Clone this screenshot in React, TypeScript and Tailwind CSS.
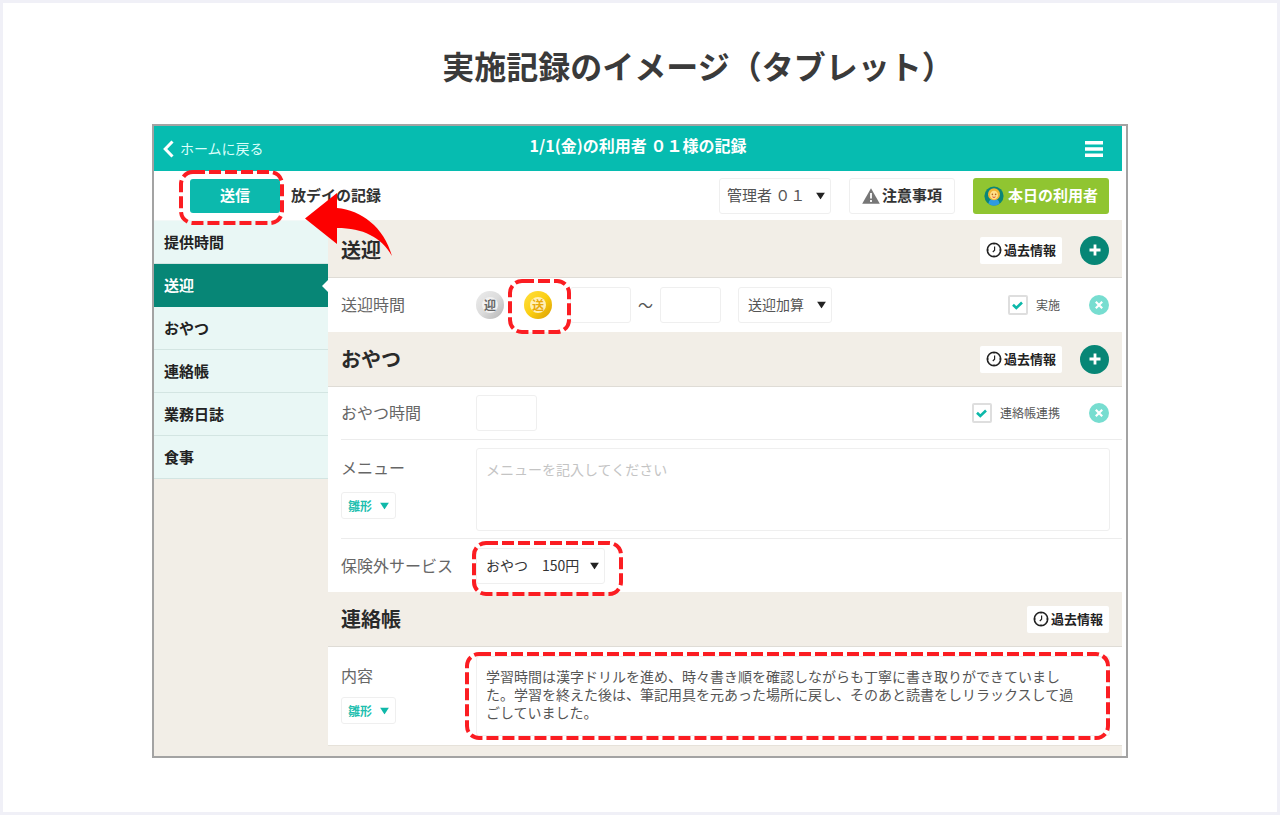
import { useState } from 'react'
import type { ReactNode } from 'react'
import { clsx } from 'clsx'

const NAV_ITEMS = ['提供時間', '送迎', 'おやつ', '連絡帳', '業務日誌', '食事']

const REPORT =
  '学習時間は漢字ドリルを進め、時々書き順を確認しながらも丁寧に書き取りができていました。学習を終えた後は、筆記用具を元あった場所に戻し、そのあと読書をしリラックスして過ごしていました。'

// Red dashed frame laid over the element it points out
function Highlight({ className }: { className: string }) {
  return (
    <div className={clsx('pointer-events-none absolute z-10 p-[2px]', className)}>
      <svg className="block h-full w-full overflow-visible" aria-hidden="true">
        <rect width="100%" height="100%" rx="12" fill="none" stroke="#fb1d22" strokeWidth="4" strokeDasharray="12 4" />
      </svg>
    </div>
  )
}

function RedArrow() {
  return (
    <svg
      className="pointer-events-none absolute top-[22px] left-[151px] z-20 h-[64px] w-[88px]"
      viewBox="0 0 88 64"
      aria-hidden="true"
    >
      <path d="M0 25.5 32 0v15c24 2 47 19 55 48-11-19-29-28-55-28v16z" fill="#fd0000" />
    </svg>
  )
}

interface SelectBoxProps {
  label: string
  value: string
  className: string
  arrowClassName?: string
}

function SelectBox({ label, value, className, arrowClassName = 'right-[6px] text-[#222]' }: SelectBoxProps) {
  return (
    <div className="relative flex w-fit">
      <select
        aria-label={label}
        className={clsx('appearance-none rounded-[3px] border border-[#efefef] bg-white', className)}
      >
        <option>{value}</option>
      </select>
      <svg
        className={clsx('pointer-events-none absolute top-1/2 h-[7px] w-[9px] -translate-y-1/2', arrowClassName)}
        viewBox="0 0 9 7"
        aria-hidden="true"
      >
        <path d="M0 0h9L4.5 7z" fill="currentColor" />
      </svg>
    </div>
  )
}

function TemplateSelect() {
  return (
    <SelectBox
      label="雛形"
      value="雛形"
      className="h-[27px] w-[55px] pl-[6px] text-xs font-bold text-[#1fbfb0]"
      arrowClassName="right-[7px] text-[#0fb8a9]"
    />
  )
}

function TimeInput({ id, label }: { id: string; label: string }) {
  return (
    <input
      id={id}
      type="text"
      aria-label={label}
      className="h-9 w-[61px] rounded-[3px] border border-[#efefef] bg-white px-2 text-sm text-[#555]"
    />
  )
}

function PastButton() {
  return (
    <button type="button" className="flex h-[27px] items-center gap-[2px] rounded-[2px] bg-white px-[6px] text-[#222]">
      <svg className="h-4 w-4" viewBox="0 0 16 16" fill="none" stroke="currentColor" aria-hidden="true">
        <circle cx="8" cy="8" r="6.7" strokeWidth="1.6" />
        <path d="M8.6 4.5v3.8L6.8 10" strokeWidth="1.2" />
        <path d="M8 1.5v1.4M8 13.1v1.4M1.5 8h1.4M13.1 8h1.4" strokeWidth="0.9" />
      </svg>
      <span className="text-[13px] font-bold">過去情報</span>
    </button>
  )
}

function AddButton() {
  return (
    <button
      type="button"
      aria-label="追加"
      className="flex h-[29px] w-[29px] items-center justify-center rounded-full bg-[#078676] text-white"
    >
      <svg className="h-3 w-3" viewBox="0 0 12 12" stroke="currentColor" strokeWidth="2.8" aria-hidden="true">
        <path d="M6 0.5v11M0.5 6h11" />
      </svg>
    </button>
  )
}

function RemoveButton() {
  return (
    <button
      type="button"
      aria-label="削除"
      className="flex h-5 w-5 items-center justify-center rounded-full bg-[#77ddd0] text-white"
    >
      <svg className="h-2 w-2" viewBox="0 0 8 8" stroke="currentColor" strokeWidth="2.2" aria-hidden="true">
        <path d="M0.8 0.8l6.4 6.4M7.2 0.8L0.8 7.2" />
      </svg>
    </button>
  )
}

function CheckField({ label }: { label: string }) {
  const [checked, setChecked] = useState(true)

  return (
    <label className="flex items-center gap-2 text-xs text-[#555]">
      <span className="relative flex">
        <input
          type="checkbox"
          checked={checked}
          onChange={(e) => setChecked(e.target.checked)}
          className="h-5 w-5 appearance-none rounded-[2px] border-2 border-[#dedede] bg-white"
        />
        {checked && (
          <svg
            className="pointer-events-none absolute inset-0 m-auto h-[9px] w-[11px]"
            viewBox="0 0 11 9"
            fill="none"
            stroke="#0cb8a9"
            strokeWidth="2.6"
            aria-hidden="true"
          >
            <path d="M1 3.8l3.3 3.2L10 1.5" />
          </svg>
        )}
      </span>
      {label}
    </label>
  )
}

function Coin({ label, active = false }: { label: string; active?: boolean }) {
  return (
    <button
      type="button"
      aria-pressed={active}
      className={clsx(
        'flex h-7 w-7 items-center justify-center rounded-full bg-gradient-to-br',
        active ? 'from-[#ffdf3a] via-[#fbcf10] to-[#d99c05]' : 'from-[#ececec] via-[#dcdcdc] to-[#b4b4b4]',
      )}
    >
      <span
        className={clsx(
          'flex h-4 w-4 items-center justify-center rounded-full text-xs font-bold leading-none',
          active ? 'bg-[#fff0b8] text-[#e8a90c]' : 'bg-[#f1f1f1] text-[#666]',
        )}
      >
        {label}
      </span>
    </button>
  )
}

function SectionHeader({ title, children }: { title: string; children: ReactNode }) {
  return (
    <div className="flex min-h-[55px] items-center justify-between border-b border-[#dfdcd6] bg-[#f2eee7] px-[13px]">
      <h2 className="text-xl font-bold text-[#2a2a2a]">{title}</h2>
      <div className="flex items-center gap-[18px]">{children}</div>
    </div>
  )
}

const rowLabel = 'w-[135px] shrink-0 pb-[2px] text-base text-[#666]'

export default function App() {
  const [current, setCurrent] = useState('送迎')

  return (
    <div className="min-h-screen border-[3px] border-[#f0f0f7] bg-white pt-[38px] font-['Noto_Sans_CJK_JP',sans-serif]">
      <h1 className="mb-[35px] pl-[116px] text-center text-[32px] leading-[48px] font-bold text-[#3a3a3a]">
        実施記録のイメージ（タブレット）
      </h1>

      <div className="mx-[149px] border-2 border-[#a3a3a3] pr-1">
        <header className="grid h-[45px] grid-cols-[1fr_auto_1fr] items-center bg-[#06bcb0] text-white">
          <a href="#home" className="flex items-center gap-[6px] pl-[9px] text-sm text-[#d9fffb]">
            <svg className="h-[18px] w-[11px]" viewBox="0 0 11 18" fill="none" stroke="#fff" strokeWidth="3" aria-hidden="true">
              <path d="M9.5 1.5L2.2 9l7.3 7.5" />
            </svg>
            <span className="pb-[2px]">ホームに戻る</span>
          </a>
          <p className="pb-2 text-base font-bold">1/1(金)の利用者 ０１様の記録</p>
          <button type="button" aria-label="メニューを開く" className="mr-[19px] justify-self-end">
            <svg className="h-4 w-[18px]" viewBox="0 0 18 16" fill="currentColor" aria-hidden="true">
              <path d="M0 0h18v3.6H0zM0 6.2h18v3.6H0zM0 12.4h18V16H0z" />
            </svg>
          </button>
        </header>

        <div className="relative flex min-h-[49px] items-center bg-white pr-[13px] pl-9 text-[15px]">
          <div className="relative flex">
            <button type="button" className="h-[34px] w-[90px] rounded-[3px] bg-[#0cb9ad] font-bold text-white">
              送信
            </button>
            <Highlight className="-top-[9px] -right-[4px] -bottom-[12px] -left-[11px]" />
          </div>
          <span className="ml-[11px] font-bold text-[#333]">放デイの記録</span>
          <RedArrow />
          <div className="ml-auto flex items-center gap-[18px]">
            <SelectBox label="担当者" value="管理者 ０１" className="h-9 w-[112px] pl-[7px] text-[#555]" />
            <button
              type="button"
              className="flex h-9 items-center gap-[2px] rounded-[3px] border border-[#efefef] bg-white px-3 font-bold text-[#333]"
            >
              <svg className="h-4 w-[18px]" viewBox="0 0 18 16" aria-hidden="true">
                <path d="M9 0.3L17.8 15.7H0.2z" fill="#777" />
                <path d="M9 5v5.6M9 12v2" stroke="#fff" strokeWidth="1.8" />
              </svg>
              注意事項
            </button>
            <button
              type="button"
              className="flex h-9 items-center gap-1 rounded-[3px] bg-[#90c531] px-[11px] font-bold text-white"
            >
              <svg className="h-5 w-5" viewBox="0 0 20 20" aria-hidden="true">
                <circle cx="10" cy="10" r="9.6" fill="#0a8579" />
                <path d="M4.5 17.8C5 14 7 12.8 10 12.8s5 1.2 5.5 5a9.6 9.6 0 0 1-11 0z" fill="#2e9be0" />
                <circle cx="10" cy="8.3" r="6" fill="#f2b632" />
                <ellipse cx="10" cy="9" rx="4" ry="4.3" fill="#ffdf8a" />
                <circle cx="8.4" cy="8.4" r="0.8" fill="#b5651d" />
                <circle cx="11.6" cy="8.4" r="0.8" fill="#b5651d" />
                <path d="M8.5 10.800q1.5 1.400 3 0" fill="none" stroke="#e0503a" strokeWidth="1" />
              </svg>
              本日の利用者
            </button>
          </div>
        </div>

        <div className="flex bg-[#f2eee7]">
          <nav className="w-[174px] shrink-0">
            <ul className="border-t border-[#f3f8f7]">
              {NAV_ITEMS.map((item) => (
                <li key={item}>
                  <a
                    href={`#${item}`}
                    onClick={() => setCurrent(item)}
                    className={clsx(
                      'relative flex h-[43px] items-center border-b pl-[10px] text-[15px] font-bold',
                      item === current
                        ? 'border-[#078676] bg-[#078676] text-white'
                        : 'border-[#d3e5e2] bg-[#e9f7f5] text-[#222]',
                    )}
                  >
                    {item}
                    {item === current && (
                      <svg className="absolute top-4 right-0 h-3 w-[6px]" viewBox="0 0 6 12" aria-hidden="true">
                        <path d="M6 0v12L0 6z" fill="#fff" />
                      </svg>
                    )}
                  </a>
                </li>
              ))}
            </ul>
          </nav>

          <main className="min-w-0 flex-1 bg-white">
            <section className="bg-[#f2eee7] pt-[3px]">
              <SectionHeader title="送迎">
                <PastButton />
                <AddButton />
              </SectionHeader>
              <div className="flex min-h-[54px] items-center bg-white px-[13px]">
                <label htmlFor="pickup-from" className={rowLabel}>
                  送迎時間
                </label>
                <div className="flex items-center gap-5">
                  <Coin label="迎" />
                  <div className="relative">
                    <Coin label="送" active />
                    <Highlight className="-top-[12px] -right-[19px] -bottom-[15px] -left-[16px]" />
                  </div>
                </div>
                <div className="ml-[18px] flex items-center gap-[7px]">
                  <TimeInput id="pickup-from" label="送迎開始時間" />
                  <span className="text-[15px] text-[#555]">～</span>
                  <TimeInput id="pickup-to" label="送迎終了時間" />
                </div>
                <div className="ml-[17px]">
                  <SelectBox label="送迎加算" value="送迎加算" className="h-9 w-[94px] pb-[2px] pl-[9px] text-sm text-[#555]" />
                </div>
                <div className="ml-auto flex items-center gap-[29px]">
                  <CheckField label="実施" />
                  <RemoveButton />
                </div>
              </div>
            </section>

            <section>
              <SectionHeader title="おやつ">
                <PastButton />
                <AddButton />
              </SectionHeader>
              <div className="flex min-h-[52px] items-center px-[13px]">
                <label htmlFor="snack-time" className={rowLabel}>
                  おやつ時間
                </label>
                <TimeInput id="snack-time" label="おやつ時間" />
                <div className="ml-auto flex items-center gap-[29px]">
                  <CheckField label="連絡帳連携" />
                  <RemoveButton />
                </div>
              </div>
              <div className="ml-[13px] flex border-t border-[#ececec] pt-2 pr-3 pb-[7px]">
                <div className="w-[135px] shrink-0 pt-[7px]">
                  <label htmlFor="menu" className="mb-[13px] block text-base text-[#666]">
                    メニュー
                  </label>
                  <TemplateSelect />
                </div>
                <textarea
                  id="menu"
                  placeholder="メニューを記入してください"
                  className="h-[83px] min-w-0 flex-1 resize-none rounded-[3px] border border-[#efefef] bg-white px-[9px] pt-[10px] text-sm leading-5 text-[#555] placeholder:text-[#c4c4c4]"
                />
              </div>
              <div className="ml-[13px] flex min-h-[54px] items-center border-t border-[#ececec]">
                <span className={rowLabel}>保険外サービス</span>
                <div className="relative">
                  <SelectBox
                    label="保険外サービス"
                    value="おやつ　150円"
                    className="h-9 w-[129px] pb-[2px] pl-[9px] text-sm text-[#333]"
                  />
                  <Highlight className="-top-[7px] -right-[18px] -bottom-[12px] -left-[4px]" />
                </div>
              </div>
            </section>

            <section>
              <SectionHeader title="連絡帳">
                <PastButton />
              </SectionHeader>
              <div className="flex min-h-[98px] py-[9px] pr-3 pl-[13px]">
                <div className="w-[135px] shrink-0 pt-[7px]">
                  <label htmlFor="report" className="mb-[10px] block text-base text-[#666]">
                    内容
                  </label>
                  <TemplateSelect />
                </div>
                <div className="relative flex min-w-0 flex-1">
                  <textarea
                    id="report"
                    defaultValue={REPORT}
                    className="h-20 min-w-0 flex-1 resize-none overflow-hidden rounded-[3px] border border-[#f0f0f0] bg-white pt-[10px] pr-6 pl-[9px] text-sm leading-[18px] text-[#555]"
                  />
                  <Highlight className="-top-[4px] right-0 -bottom-[4px] -left-[11px]" />
                </div>
              </div>
            </section>
            <div className="h-[11px] border-t border-[#e6e2da] bg-[#f2eee7]" />
          </main>
        </div>
      </div>
    </div>
  )
}
